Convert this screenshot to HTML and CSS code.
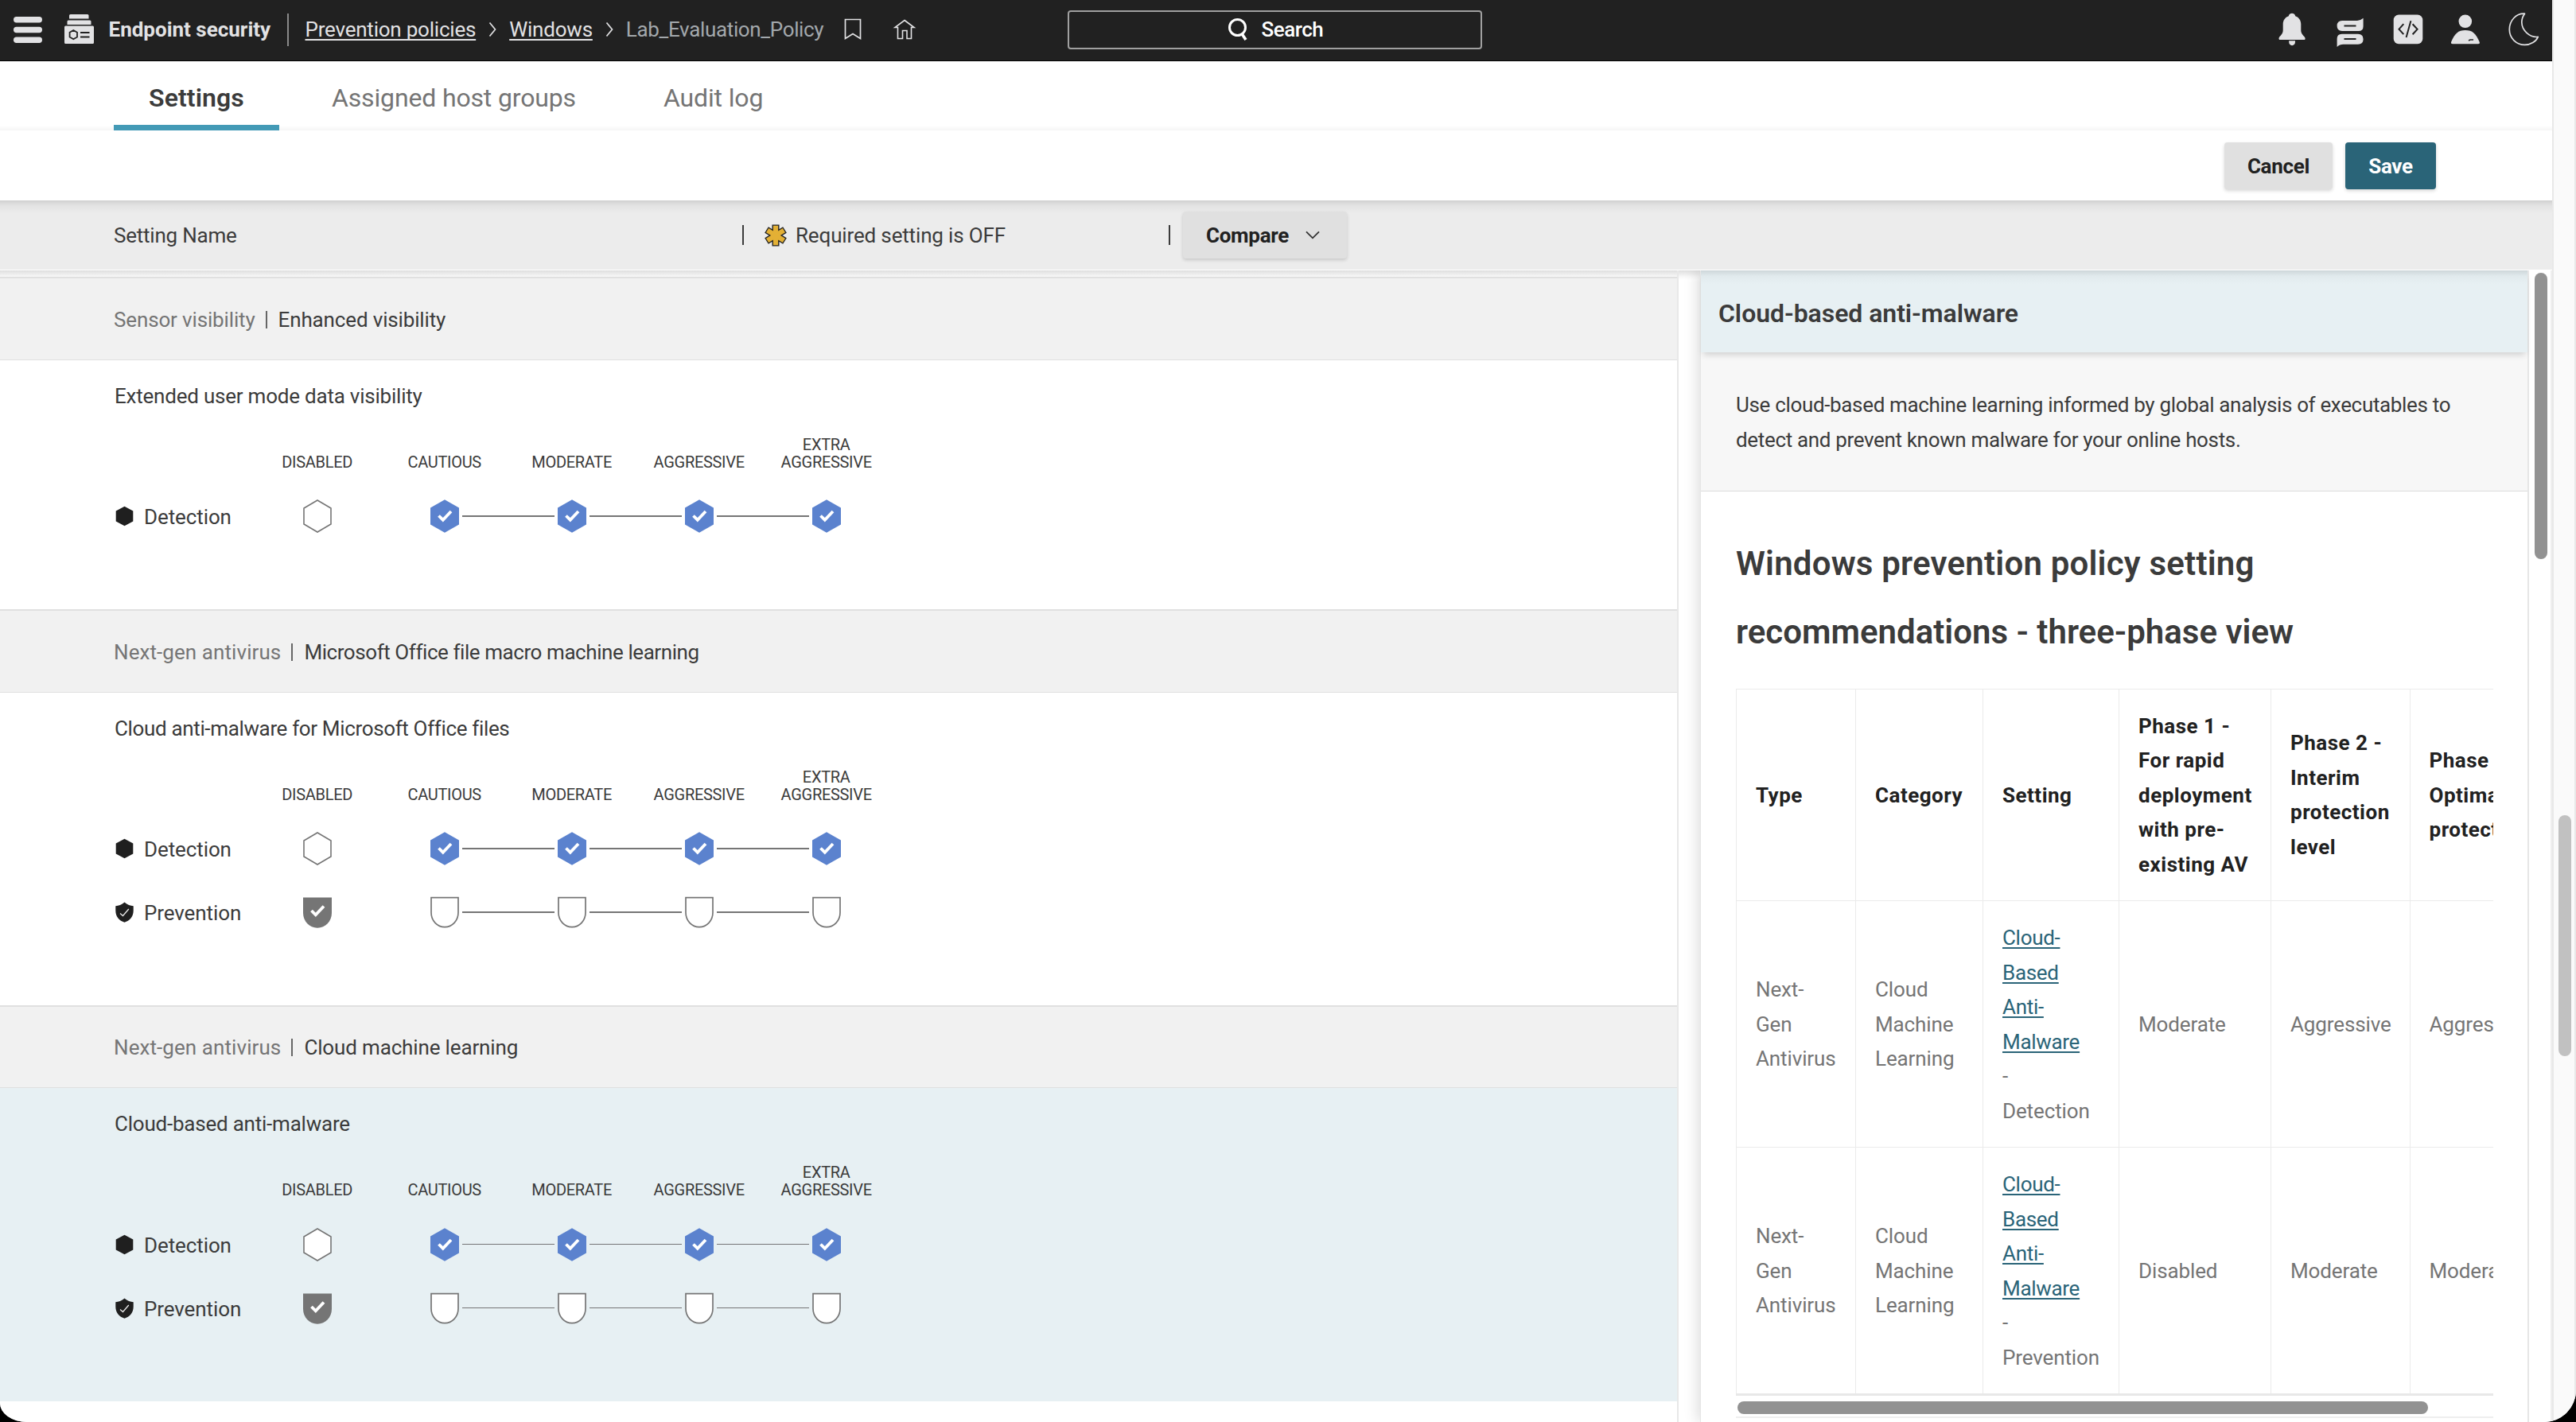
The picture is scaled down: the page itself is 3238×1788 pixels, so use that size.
FILE: index.html
```
<!DOCTYPE html>
<html lang="en">
<head>
<meta charset="utf-8">
<title>Endpoint security</title>
<link rel="stylesheet" href="styles.css">
</head>
<body>
<svg class="defs" aria-hidden="true">
  <symbol id="hex" viewBox="0 0 36 42"><path d="M18 1 35 11V31L18 41 1 31V11Z" fill="#fff" stroke="#757575" stroke-width="1.6"/></symbol>
  <symbol id="hex-on" viewBox="0 0 36 42"><path d="M18 .3 36.3 10.7V31.3L18 41.7-.3 31.3V10.7Z" fill="#5b82ce"/><path d="M10.5 20.5 15.8 25.7 26 15" fill="none" stroke="#fff" stroke-width="3.8"/></symbol>
  <symbol id="shield" viewBox="0 0 36 42"><path d="M1 2.6H35V21.5C35 31.5 27.5 39.6 18 39.6S1 31.5 1 21.5Z" fill="#fff" stroke="#757575" stroke-width="1.7"/></symbol>
  <symbol id="shield-on" viewBox="0 0 36 42"><path d="M0 2.5H36V22C36 32.5 28 40.7 18 40.7S0 32.5 0 22Z" fill="#757575"/><path d="M10.5 19 15.8 24.3 26 13.5" fill="none" stroke="#fff" stroke-width="3.8"/></symbol>
  <symbol id="detect" viewBox="0 0 24 26"><path d="M12 .8 22.8 6.6V19.4L12 25.2 1.2 19.4V6.6Z" fill="#1f1f1f"/></symbol>
  <symbol id="prevent" viewBox="0 0 24 26"><path d="M12 .5C15.500 3.500 19.500 5 23.200 5.300V11C23.200 18.500 18.500 23.800 12 25.700 5.500 23.800.8 18.500.8 11V5.300C4.500 5 8.500 3.500 12 .5Z" fill="#1f1f1f"/><path d="M6.500 14.500 10 17.500 17.300 9" fill="none" stroke="#e8e8e8" stroke-width="1.300"/></symbol>
  <symbol id="crumb" viewBox="0 0 10 20"><path d="M1.500 1.500 8.500 10 1.500 18.500" fill="none" stroke="#e2e2e4" stroke-width="1.700"/></symbol>
</svg>

<div class="window">
<div class="app">
  <header class="topbar">
    <svg class="menu" viewBox="0 0 36 36" fill="#e2e2e4"><rect y="1" width="36" height="7.500" rx="3.700"/><rect y="13.800" width="36" height="7.500" rx="3.700"/><rect y="26.500" width="36" height="7.500" rx="3.700"/></svg>
    <svg class="product" viewBox="0 0 37 37" fill="#e2e2e4"><path d="M7.500 0H29Q30.500 0 30.500 1.500V5.500H6V1.500Q6 0 7.500 0ZM5 7.500H32Q33.500 7.500 33.500 9V13H3.500V9Q3.500 7.500 5 7.500ZM1.500 14.500H35.500Q37 14.500 37 16V35.500Q37 37 35.500 37H1.500Q0 37 0 35.500V16Q0 14.500 1.500 14.500Z"/><path d="M11.300 20 16 22.800V28.400L11.300 31.200 6.600 28.400V22.800ZM20 23H31.500M20 28.500H31.500" stroke="#212121" stroke-width="1.800"/></svg>
    <span class="product-name">Endpoint security</span>
    <span class="rule"></span>
    <nav class="crumbs">
      <a>Prevention policies</a><svg><use href="#crumb"/></svg><a class="windows">Windows</a><svg><use href="#crumb"/></svg><span>Lab_Evaluation_Policy</span>
    </nav>
    <svg class="bookmark" viewBox="0 0 22 28" fill="none" stroke="#e2e2e4" stroke-width="1.700"><path d="M1.500 1.500H20.500V25.500L11 19.500 1.500 25.500Z"/></svg>
    <svg class="home" viewBox="0 0 26 26" fill="none" stroke="#e2e2e4" stroke-width="1.600"><path d="M13 1.500 25 10.500H21.500V24.500H16V14.500H10.500V24.500H4.500V10.500H1Z"/></svg>
    <div class="search"><svg viewBox="0 0 26 30" fill="none" stroke="#fff"><circle cx="12.500" cy="12.500" r="10" stroke-width="3"/><path d="M18 20.500 23 28" stroke-width="3.600"/></svg><span>Search</span></div>
    <div class="tools">
      <svg viewBox="0 0 48 48" fill="#e2e2e4"><path d="M24 2.800C26.300 2.800 28 4.300 28.200 6.200 32.800 7.700 35.300 11.700 35.300 16.500V24C35.300 28 38 30.500 40 32.700Q41.300 34.300 40.200 36H8Q6.800 34.300 8 32.700C10 30.500 12.700 28 12.700 24V16.500C12.700 11.700 15.200 7.700 19.800 6.200 20 4.300 21.700 2.800 24 2.800ZM20.200 37.300H28V39C28 44.500 20.200 44.500 20.200 39Z"/></svg>
      <svg viewBox="0 0 48 48" fill="#e2e2e4"><path d="M14 12H33Q37 12 40.600 8.800V19Q40.600 25 34.600 25H14Q7.600 25 7.600 18.500 7.600 12 14 12ZM7.600 45V34.700Q7.600 28.700 13.600 28.700H34Q40.600 28.700 40.600 35.200 40.600 41.700 34 41.700H15.500Q11 41.700 7.600 45Z"/><path d="M16.500 18.600H31.500M16.500 35H31.500" stroke="#212121" stroke-width="2"/></svg>
      <svg viewBox="0 0 48 48" fill="#e2e2e4"><rect x="5.700" y="4.600" width="36.600" height="36.600" rx="6.500"/><path d="M18.300 16.200 12.500 22.700 18.300 29.200M29.600 16.200 35.600 22.700 29.600 29.200M27.400 12.300 21.600 33" fill="none" stroke="#212121" stroke-width="2"/></svg>
      <svg viewBox="0 0 48 48" fill="#e2e2e4"><circle cx="23.800" cy="12.800" r="8.300"/><path d="M23.800 24C33 24 37 28 41.800 39Q42.300 41.200 40 41.200H8Q5.500 41.200 6 39C10.500 28 15 24 23.800 24Z"/><path d="M28 36.900 30 36H34" fill="none" stroke="#212121" stroke-width="1.600"/></svg>
      <svg viewBox="0 0 48 48" fill="none" stroke="#e2e2e4" stroke-width="1.700" stroke-linejoin="round"><path d="M25.500 3.200C14.500 2.600 6.300 12 6.300 23 6.300 34 15 42.400 25.500 42.400 33 42.400 40 38 42.300 32.400 31.500 33.500 22 24 21.800 14 21.700 9.500 23.500 6 25.500 3.200Z"/></svg>
    </div>
  </header>

  <nav class="tabs"><a class="tab active">Settings</a><a class="tab">Assigned host groups</a><a class="tab">Audit log</a></nav>

  <div class="actions"><button class="btn">Cancel</button><button class="btn save">Save</button></div>

  <div class="filters">
    <span class="col-name">Setting Name</span>
    <span class="bar"></span>
    <svg class="star" viewBox="0 0 28 28" fill="none"><path d="M14 .5V27.500M2.500 7 25.500 21M25.500 7 2.500 21" stroke="#222" stroke-width="9"/><path d="M14 1.700V26.300M3.600 7.700 24.400 20.300M24.400 7.700 3.600 20.300" stroke="#e3b035" stroke-width="6.200"/></svg>
    <span class="required">Required setting is OFF</span>
    <span class="bar"></span>
    <button class="btn compare">Compare<svg viewBox="0 0 18 11" fill="none" stroke="#333" stroke-width="1.800"><path d="M1 1.300 9 9.300 17 1.300"/></svg></button>
  </div>

  <main class="main">
    <section class="list">
      <h2 class="group"><span>Sensor visibility</span><i></i>Enhanced visibility</h2>
      <article class="setting">
        <h3>Extended user mode data visibility</h3>
        <div class="levels"><b></b><b>DISABLED</b><b>CAUTIOUS</b><b>MODERATE</b><b>AGGRESSIVE</b><b>EXTRA AGGRESSIVE</b></div>
        <div class="scale"><label><svg><use href="#detect"/></svg>Detection</label>
          <div class="stop"><svg><use href="#hex"/></svg></div>
          <div class="stop right"><svg><use href="#hex-on"/></svg></div>
          <div class="stop left right"><svg><use href="#hex-on"/></svg></div>
          <div class="stop left right"><svg><use href="#hex-on"/></svg></div>
          <div class="stop left"><svg><use href="#hex-on"/></svg></div></div>
      </article>

      <h2 class="group antivirus"><span>Next-gen antivirus</span><i></i><em>Microsoft Office file macro machine learning</em></h2>
      <article class="setting office">
        <h3>Cloud anti-malware for Microsoft Office files</h3>
        <div class="levels"><b></b><b>DISABLED</b><b>CAUTIOUS</b><b>MODERATE</b><b>AGGRESSIVE</b><b>EXTRA AGGRESSIVE</b></div>
        <div class="scale"><label><svg><use href="#detect"/></svg>Detection</label>
          <div class="stop"><svg><use href="#hex"/></svg></div>
          <div class="stop right"><svg><use href="#hex-on"/></svg></div>
          <div class="stop left right"><svg><use href="#hex-on"/></svg></div>
          <div class="stop left right"><svg><use href="#hex-on"/></svg></div>
          <div class="stop left"><svg><use href="#hex-on"/></svg></div></div>
        <div class="scale"><label><svg><use href="#prevent"/></svg>Prevention</label>
          <div class="stop"><svg><use href="#shield-on"/></svg></div>
          <div class="stop right"><svg><use href="#shield"/></svg></div>
          <div class="stop left right"><svg><use href="#shield"/></svg></div>
          <div class="stop left right"><svg><use href="#shield"/></svg></div>
          <div class="stop left"><svg><use href="#shield"/></svg></div></div>
      </article>

      <h2 class="group antivirus"><span>Next-gen antivirus</span><i></i>Cloud machine learning</h2>
      <article class="setting selected">
        <h3>Cloud-based anti-malware</h3>
        <div class="levels"><b></b><b>DISABLED</b><b>CAUTIOUS</b><b>MODERATE</b><b>AGGRESSIVE</b><b>EXTRA AGGRESSIVE</b></div>
        <div class="scale"><label><svg><use href="#detect"/></svg>Detection</label>
          <div class="stop"><svg><use href="#hex"/></svg></div>
          <div class="stop right"><svg><use href="#hex-on"/></svg></div>
          <div class="stop left right"><svg><use href="#hex-on"/></svg></div>
          <div class="stop left right"><svg><use href="#hex-on"/></svg></div>
          <div class="stop left"><svg><use href="#hex-on"/></svg></div></div>
        <div class="scale"><label><svg><use href="#prevent"/></svg>Prevention</label>
          <div class="stop"><svg><use href="#shield-on"/></svg></div>
          <div class="stop right"><svg><use href="#shield"/></svg></div>
          <div class="stop left right"><svg><use href="#shield"/></svg></div>
          <div class="stop left right"><svg><use href="#shield"/></svg></div>
          <div class="stop left"><svg><use href="#shield"/></svg></div></div>
      </article>
    </section>

    <aside class="panel">
      <h2 class="panel-title">Cloud-based anti-malware</h2>
      <p class="panel-text">Use cloud-based machine learning informed by global analysis of executables to<br>detect and prevent known malware for your online hosts.</p>
      <div class="panel-body">
        <h1><span>Windows prevention policy setting</span><br>recommendations - three-phase view</h1>
        <div class="table-clip">
          <table>
            <colgroup><col class="c1"><col class="c2"><col class="c3"><col class="c4"><col class="c5"><col class="c6"></colgroup>
            <tr><th>Type</th><th>Category</th><th>Setting</th><th>Phase 1 -<br>For rapid<br>deployment<br>with pre-<br>existing AV</th><th>Phase 2 -<br>Interim<br>protection<br>level</th><th>Phase 3 -<br>Optimal<br>protection</th></tr>
            <tr><td>Next-<br>Gen<br>Antivirus</td><td>Cloud<br>Machine<br>Learning</td><td><a>Cloud-<br>Based<br>Anti-<br>Malware</a><br>-<br>Detection</td><td>Moderate</td><td>Aggressive</td><td>Aggressive</td></tr>
            <tr><td>Next-<br>Gen<br>Antivirus</td><td>Cloud<br>Machine<br>Learning</td><td><a>Cloud-<br>Based<br>Anti-<br>Malware</a><br>-<br>Prevention</td><td>Disabled</td><td>Moderate</td><td>Moderate</td></tr>
          </table>
          <div class="hscroll"><span></span></div>
        </div>
      </div>
    </aside>
    <div class="vscroll"><span></span></div>
  </main>
</div>
<div class="page-scroll"><span></span></div>
</div>
</body>
</html>
```
FILE: styles.css
```
* { box-sizing: border-box; }
html { background: #000; }
body {
  margin: 0;
  color: #3b3b3b;
  font: 400 26px/40px Roboto, "Liberation Sans", sans-serif;
  letter-spacing: -.22px;
}
h1, h2, h3, p { margin: 0; font-weight: 400; }
svg { display: block; flex: none; overflow: visible; }
button { font: inherit; letter-spacing: inherit; }
.defs { display: none; }

.window {
  display: flex;
  width: 3238px;
  height: 1788px;
  overflow: hidden;
  background: #fff;
  border-radius: 0 0 40px 34px / 0 0 40px 24px;
}
.app { display: flex; flex-direction: column; width: 3208px; }

/* top bar */
.topbar {
  display: flex;
  align-items: center;
  height: 77px;
  padding: 0 12px 1px 17px;
  background: #212121;
  border-bottom: 1px solid #000;
  color: #e2e2e4;
}
.menu { width: 36px; height: 36px; margin-right: 28px; }
.product { width: 37px; height: 37px; margin: -2px 18.500px 0 0; }
.product-name { width: 224px; margin-top: -2px; font-weight: 700; letter-spacing: 0; }
.rule { width: 2px; height: 41px; margin-right: 21px; background: #8a8a8a; }
.crumbs { display: flex; align-items: center; margin-top: -2px; }
.crumbs a { text-decoration: underline; text-decoration-thickness: 2px; text-underline-offset: 3px; text-decoration-skip-ink: none; }
.crumbs svg { width: 10px; height: 20px; margin: 0 16px; }
.crumbs span { color: #a3a8ac; letter-spacing: -.34px; }
.bookmark { width: 22px; height: 28px; margin: -2px 0 0 26px; }
.home { width: 26px; height: 26px; margin: -2px 0 0 41px; }
.search {
  display: flex;
  align-items: center;
  justify-content: center;
  gap: 17px;
  width: 521px;
  height: 49px;
  margin: -1px 0 0 192px;
  border: 2px solid #a0a0a0;
  border-radius: 4px;
  color: #fff;
  font-weight: 500;
  letter-spacing: -.5px;
}
.search svg { width: 26px; height: 30px; }
.tools { display: flex; gap: 24.700px; margin-left: auto; }
.tools svg { width: 48px; height: 48px; }

/* tabs */
.tabs {
  display: flex;
  gap: 22px;
  height: 87px;
  padding-left: 143px;
  background: linear-gradient(#fff 81px, #f5f5f5);
  color: #757575;
  font-size: 32px;
  letter-spacing: -.15px;
}
.tab { padding: 26px 44px 0; line-height: 40px; }
.tab.active {
  width: 208px;
  background: linear-gradient(#439ab6, #439ab6) bottom / 100% 7px no-repeat;
  color: #3b3b3b;
  font-weight: 600;
  letter-spacing: .1px;
}

.actions { display: flex; gap: 16px; height: 88px; padding: 15px 0 0 2796px; background: #fff; }
.btn {
  height: 59px;
  width: 136px;
  padding: 0;
  border: 0;
  border-radius: 4px;
  background: #e0e0e0;
  box-shadow: 0 2px 4px rgba(0, 0, 0, .16);
  color: #212121;
  font-weight: 700;
  line-height: 40px;
  letter-spacing: -.3px;
}
.save { width: 114px; background: #2a6478; color: #fff; }

.filters {
  display: flex;
  align-items: center;
  height: 88px;
  padding-left: 143px;
  background: linear-gradient(#d0d0d0, #e2e2e2 6px, #ececec 16px);
  border-bottom: 1px solid #fff;
}
.col-name { width: 790px; }
.bar { width: 2px; height: 25px; background: #3b3b3b; }
.star { width: 28px; height: 28px; margin: 0 11px 0 26px; }
.required { width: 468.500px; letter-spacing: -.15px; }
.compare { display: flex; align-items: center; width: 206px; margin-left: 16.500px; padding-left: 29px; }
.compare svg { width: 18px; height: 11px; margin-left: 21px; }

/* settings list */
.main { display: flex; height: 1448px; overflow: hidden; background: linear-gradient(#dedede, #f8f8f8 8px, #fff 12px); }
.list {
  width: 2110px;
  padding-top: 8px;
  border-right: 2px solid #e8e8e8;
}
.group {
  display: flex;
  align-items: center;
  height: 104.500px;
  padding: 2px 0 0 143px;
  background: #f1f1f1;
  border-top: 2px solid #e0e0e0;
  border-bottom: 1px solid #e0e0e0;
  font-size: 26px;
  letter-spacing: -.15px;
}
.group span { color: #757575; }
.group i { width: 2px; height: 22px; margin: 0 14px 0 13px; background: #666; }
.group em { font-style: normal; letter-spacing: -.43px; }
.antivirus span { letter-spacing: .08px; }
.setting { height: 313.500px; padding: 25px 0 0 144px; background: #fff; }
.setting:nth-of-type(n+2) { height: 393px; }
.setting.selected { height: 394px; background: #e7f0f3; }
.setting h3 { font-size: 26px; line-height: 40px; }
.office h3 { letter-spacing: -.35px; }
.levels { display: grid; grid-template-columns: 174.700px repeat(5, 160px); align-items: end; height: 44px; margin: 30px 0 17.700px; }
.levels b { padding: 0 18px; font-size: 20px; font-weight: 400; line-height: 22px; letter-spacing: -.3px; text-align: center; }
.scale { display: grid; grid-template-columns: 174.700px repeat(5, 160px); align-items: center; height: 80px; }
.scale label { display: flex; align-items: center; gap: 12px; padding-top: 2px; letter-spacing: -.1px; }
.scale label svg { width: 25px; height: 26px; margin-top: -2px; }
.stop { display: flex; align-items: center; justify-content: center; gap: 4px; }
.stop svg { width: 36px; height: 42px; }
.stop::before, .stop::after { content: ""; flex: 1; height: 2px; }
.stop.left::before, .stop.right::after { background: #757575; }
.selected .stop::before, .selected .stop::after { height: 1px; }

/* details panel */
.panel {
  width: 1042px;
  margin-left: 27px;
  border: solid #e6e6e6;
  border-width: 0 2px 0 1px;
  background: #fff;
  box-shadow: -4px 0 16px rgba(0, 0, 0, .13);
}
.panel-title {
  position: relative;
  height: 103px;
  padding: 34px 0 0 22px;
  background: linear-gradient(#cdd6d9, #e1eaed 7px, #e7f0f3 17px);
  box-shadow: 0 6px 8px -3px rgba(0, 0, 0, .16);
  font-size: 32px;
  font-weight: 600;
  line-height: 40px;
  letter-spacing: -.05px;
}
.panel-text { height: 174.500px; padding: 45px 0 0 44px; background: #f7f7f7; border-bottom: 1.500px solid #dcdcdc; line-height: 43.500px; letter-spacing: -.34px; }
.panel-body { padding: 48px 0 0 44px; }
.panel-body h1 { height: 200px; font-size: 42px; font-weight: 600; line-height: 86.700px; letter-spacing: 0; }
.panel-body h1 span { letter-spacing: .2px; }
.table-clip { width: 952px; overflow: hidden; }
table { width: 1017px; table-layout: fixed; border-spacing: 0; border-bottom: 3px solid #e8e8e8; line-height: 43.500px; }
.c1 { width: 150px; } .c2 { width: 160px; } .c3 { width: 171px; } .c4 { width: 191px; } .c5 { width: 174.500px; } .c6 { width: 170.500px; }
th, td { height: 310px; padding: 2px 0 0 24px; border: solid #ebebeb; border-width: 1.500px 0 0 1.500px; text-align: left; vertical-align: middle; white-space: nowrap; }
th { height: 266.500px; color: #212121; font-weight: 700; letter-spacing: .5px; }
td { color: #757575; letter-spacing: -.12px; }
td a { color: #2a6478; letter-spacing: -.3px; text-decoration: underline; text-decoration-thickness: 2px; text-underline-offset: 3px; text-decoration-skip-ink: none; }
.hscroll { height: 28px; padding: 7px 2px; border-bottom: 2px solid #eee; }
.hscroll span { display: block; width: 868px; height: 16px; border-radius: 8px; background: #929292; }

.vscroll { width: 29px; padding: 3px 0 0 7px; border-right: 2px solid #eee; background: #fff; }
.vscroll span { display: block; width: 16px; height: 360px; border-radius: 8px; background: #929292; }

.page-scroll { width: 30px; padding: 1025px 0 0 6px; background: #fafafa; border: solid #e8e8e8; border-width: 0 2px; }
.page-scroll span { display: block; width: 16px; height: 303px; border-radius: 8px; background: #c1c1c1; }
```
